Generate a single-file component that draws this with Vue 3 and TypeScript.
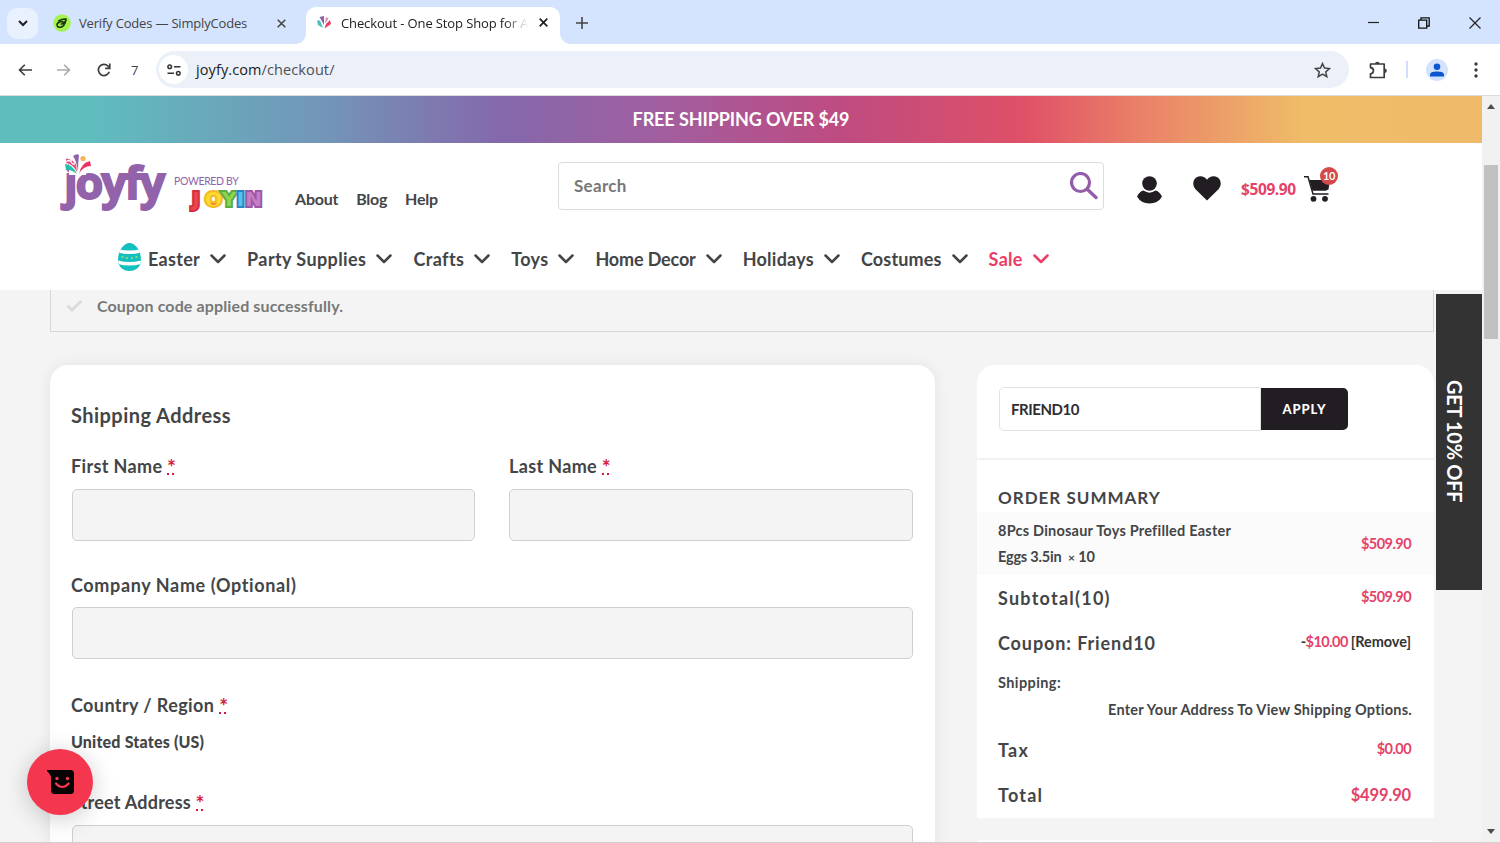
<script setup lang="ts">
interface NavItem { label: string; key: string }
const nav: NavItem[] = [
  { label: 'Easter', key: 'easter' },
  { label: 'Party Supplies', key: 'party' },
  { label: 'Crafts', key: 'crafts' },
  { label: 'Toys', key: 'toys' },
  { label: 'Home Decor', key: 'decor' },
  { label: 'Holidays', key: 'holidays' },
  { label: 'Costumes', key: 'costumes' },
  { label: 'Sale', key: 'sale' },
]
</script>

<template>
  <div class="browser">
    <div class="tabstrip">
      <button class="tab-search" aria-label="Search tabs">
        <svg width="10" height="7" viewBox="0 0 10 7"><path d="M1 1l4 4 4-4" fill="none" stroke="#1f1f1f" stroke-width="2" /></svg>
      </button>
      <div class="tab idle">
        <svg class="fav" width="18" height="18" viewBox="0 0 19 19">
          <circle cx="9.500" cy="9.500" r="9.300" fill="#a4f24f" />
          <ellipse cx="8" cy="11" rx="3.800" ry="2.800" transform="rotate(-20 8 11)" fill="none" stroke="#17320a" stroke-width="1.600" />
          <path d="M5.500 7.500q4-2.500 9-2.200M8 11q4-1 6-5M12.500 10.500l1.300-4" fill="none" stroke="#17320a" stroke-width="1.400" />
        </svg>
        <span class="tab-title first">Verify Codes — SimplyCodes</span>
        <svg class="x" width="9" height="9" viewBox="0 0 9 9"><path d="M.7.7l7.600 7.600M8.300.7L.7 8.300" stroke="#444" stroke-width="1.500" /></svg>
      </div>
      <div class="tab active">
        <svg class="fav2" width="14" height="13" viewBox="0 0 14 13">
          <path d="M0 4.500h3L6 12 1 9z" fill="#4bbec1" /><path d="M2.500 1L7 0v9z" fill="#8c62a9" /><path d="M9 1l2.500 1.500L8 8z" fill="#d98bb0" /><path d="M13 4l1 4-6.500 4.500L9 8z" fill="#ea3f69" />
        </svg>
        <span class="tab-title second">Checkout - One Stop Shop for A</span>
        <svg class="x" width="9" height="9" viewBox="0 0 9 9"><path d="M.7.7l7.600 7.600M8.300.7L.7 8.300" stroke="#1f1f1f" stroke-width="1.700" /></svg>
      </div>
      <svg class="plus" width="12" height="12" viewBox="0 0 12 12"><path d="M6 0v12M0 6h12" stroke="#444" stroke-width="1.600" /></svg>
      <div class="win">
        <svg width="11" height="12" viewBox="0 0 11 12"><path d="M0 5.500h11" stroke="#222" stroke-width="1.200" /></svg>
        <svg width="12" height="12" viewBox="0 0 12 12"><path d="M.7 3.200h8v8h-8zM3 3V.8h8.200V9H9" fill="none" stroke="#111" stroke-width="1.300" /></svg>
        <svg width="12" height="12" viewBox="0 0 12 12"><path d="M.5.5l11 11M11.500.5l-11 11" stroke="#222" stroke-width="1.200" /></svg>
      </div>
    </div>

    <div class="toolbar">
      <svg class="back" width="14" height="12" viewBox="0 0 14 12"><path d="M14 6H1.500M6.800.7L1.500 6l5.300 5.300" fill="none" stroke="#3c3c3c" stroke-width="1.600" /></svg>
      <svg class="fwd" width="14" height="12" viewBox="0 0 14 12"><path d="M0 6h12.500M7.200.7L12.500 6l-5.300 5.300" fill="none" stroke="#aaa" stroke-width="1.600" /></svg>
      <svg class="reload" width="14" height="14" viewBox="0 0 14 14"><path d="M12.300 8.800A5.600 5.600 0 1 1 11 3L12.500 4.800" fill="none" stroke="#3c3c3c" stroke-width="1.700" /><path d="M12.800.6v4.800H8.200" fill="none" stroke="#3c3c3c" stroke-width="1.600" /></svg>
      <span class="seven">7</span>
      <div class="omnibox">
        <span class="site">
          <svg width="14" height="12" viewBox="0 0 14 12"><g fill="none" stroke="#333" stroke-width="1.500"><circle cx="2.700" cy="2.700" r="1.800" /><path d="M7 2.700h6.500M.5 9.300H7" /><circle cx="11.300" cy="9.300" r="1.800" /></g></svg>
        </span>
        <span class="url">joyfy.com<i>/checkout/</i></span>
        <svg class="star" width="17" height="16" viewBox="0 0 17 16"><path d="M8.500 1.600l2 4.500 4.900.5-3.700 3.300 1.100 4.800-4.300-2.500-4.300 2.500 1.100-4.800L1.600 6.600l4.900-.5z" fill="none" stroke="#444" stroke-width="1.500" /></svg>
      </div>
      <svg class="puzzle" width="19" height="18" viewBox="0 0 19 18"><path d="M1.500 3H15.200V16.500H1.500V12.800C5.400 12.500 5.400 7 1.500 6.700z" fill="none" stroke="#3c3c3c" stroke-width="1.700" stroke-linejoin="round" /><path d="M6 3a2.300 2.300 0 0 1 4.600 0zM15.500 7.400a2.300 2.300 0 0 1 0 4.600z" fill="#3c3c3c" /></svg>
      <span class="divider"></span>
      <span class="profile"><svg width="14" height="14" viewBox="0 0 14 14"><circle cx="7" cy="3.700" r="3.300" fill="#0b57d0" /><path d="M0 13.500v-2C0 9 4 8.400 7 8.400s7 .6 7 3.100v2z" fill="#0b57d0" /></svg></span>
      <svg class="dots" width="4" height="16" viewBox="0 0 4 16"><g fill="#3c3c3c"><circle cx="2" cy="2" r="1.700" /><circle cx="2" cy="8" r="1.700" /><circle cx="2" cy="14" r="1.700" /></g></svg>
    </div>

    <div class="viewport">
      <main class="page">
        <div class="promo"><span>FREE SHIPPING OVER $49</span></div>
        <header>
          <div class="top">
            <div class="logo">
              <span class="joyfy">joyfy</span>
              <svg class="burst" width="26" height="21" viewBox="0 0 26 21">
                <rect x="4" y="8" width="17" height="13" fill="#fff" />
                <path d="M0 10q7 0 12 10Q5 15 1 16z" fill="#22bfa9" />
                <path d="M1 5q4-2 6 1t4 4l1 8Q8 10 1 9z" fill="#e64d7d" />
                <path d="M1 8q3-3 5 0t4 2M3 4q3 0 4 3" fill="none" stroke="#fff" stroke-width="1.300" />
                <path d="M8 2q4-3 6-1-1 8-1 17Q12 8 8 2z" fill="#8f62aa" />
                <circle cx="18" cy="4.500" r="2.600" fill="#f6b456" />
                <path d="M25 7l1 5q-8 0-12 8 2-11 11-13z" fill="#ee3465" />
              </svg>
              <div class="powered">
                <span class="by">POWERED BY</span>
                <span class="joyin"><b class="j">J</b><b class="o">O</b><b class="y">Y</b><b class="i">I</b><b class="n">N</b></span>
              </div>
            </div>
            <nav class="links"><a class="about">About</a><a class="blog">Blog</a><a class="help">Help</a></nav>
            <div class="search">
              <span>Search</span>
              <svg width="28" height="28" viewBox="0 0 28 28"><circle cx="10.500" cy="10.500" r="9" fill="none" stroke="#925eac" stroke-width="3.200" /><path d="M17.500 17.500l8.500 8" stroke="#925eac" stroke-width="3.400" stroke-linecap="round" /></svg>
            </div>
            <svg class="user" width="25" height="28" viewBox="0 0 25 28"><circle cx="12.500" cy="7.500" r="7.300" fill="#211d22" /><path d="M0 20.500Q3 15 6.500 14.500q6 4.300 12 0Q22 15 25 20.500 21 27.500 12.500 27.500T0 20.500z" fill="#211d22" /></svg>
            <svg class="heart" width="28" height="25" viewBox="0 0 28 25"><path d="M14 24.500L2.500 13.200C-.8 9.800-.3 4 3.200 1.600 6.800-.9 11.500 0 14 3.700 16.500 0 21.200-.9 24.800 1.600c3.500 2.400 4 8.200.7 11.600z" fill="#211d22" /></svg>
            <span class="cart-total">$509.90</span>
            <div class="cart">
              <svg width="27" height="26" viewBox="0 0 27 26"><path d="M0 .8h4L9 18h15.500" fill="none" stroke="#211d22" stroke-width="1.500" /><path d="M5.500 4H26l-1.500 9.500-3 1.300H8.500z" fill="#211d22" /><circle cx="9.500" cy="22.800" r="2.900" fill="#211d22" /><circle cx="21" cy="22.800" r="2.900" fill="#211d22" /></svg>
              <span class="badge">10</span>
            </div>
          </div>
          <nav class="menu">
            <svg class="egg" width="23" height="28" viewBox="0 0 23 28">
              <clipPath id="egg-shape"><path d="M11.500 0C18 0 23 9 23 16.500S18 28 11.500 28 0 24 0 16.500 5 0 11.500 0z" /></clipPath>
              <g clip-path="url(#egg-shape)"><rect width="23" height="28" fill="#14bfc0" /><path d="M0 6q11.500 3 23 0v3.500q-11.500 3-23 0zM0 17.500q11.500 3 23 0V21q-11.500 3-23 0z" fill="#fff" /><path d="M3.500 14h2M8 15h2M13 15h2M17.500 14h2" stroke="#a5e36b" stroke-width="1.500" /></g>
            </svg>
            <a v-for="n in nav" :key="n.key" :class="n.key">
              <span>{{ n.label }}</span>
              <svg width="16" height="10" viewBox="0 0 16 10"><path d="M1.500 1.500L8 8l6.500-6.500" fill="none" stroke="currentColor" stroke-width="2.500" stroke-linecap="round" stroke-linejoin="round" /></svg>
            </a>
          </nav>
        </header>

        <div class="notice">
          <svg width="17" height="13" viewBox="0 0 17 13"><path d="M1.500 6.500l4.500 4.500L15.500 1.700" fill="none" stroke="#dcdcdc" stroke-width="3" /></svg>
          <span>Coupon code applied successfully.</span>
        </div>

        <div class="columns">
          <section class="card form">
            <h2>Shipping Address</h2>
            <div class="pair">
              <label><span class="lab"><em>First Name</em> <abbr>*</abbr></span><span class="input"></span></label>
              <label><span class="lab last"><em>Last Name</em> <abbr>*</abbr></span><span class="input"></span></label>
            </div>
            <label class="company"><span class="lab"><em>Company Name (Optional)</em></span><span class="input"></span></label>
            <div class="country"><span class="lab"><em>Country / Region</em> <abbr>*</abbr></span><strong>United States (US)</strong></div>
            <label class="street"><span class="lab"><em>Street Address</em> <abbr>*</abbr></span><span class="input"></span></label>
          </section>

          <aside>
            <section class="card summary">
              <div class="coupon"><span class="code">FRIEND10</span><button>APPLY</button></div>
              <h3>ORDER SUMMARY</h3>
              <div class="product"><p><span class="p1">8Pcs Dinosaur Toys Prefilled Easter</span><span class="p2">Eggs 3.5in&nbsp; <small>×</small> 10</span></p><span class="money">$509.90</span></div>
              <div class="line"><span class="key">Subtotal(10)</span><span class="money">$509.90</span></div>
              <div class="line"><span class="key k-cou">Coupon: Friend10</span><span class="money"><i>-</i>$10.00 <i class="remove">[Remove]</i></span></div>
              <div class="ship">Shipping:</div>
              <div class="enter"><span>Enter Your Address To View Shipping Options.</span></div>
              <div class="line"><span class="key">Tax</span><span class="money">$0.00</span></div>
              <div class="line"><span class="key">Total</span><span class="money grand">$499.90</span></div>
            </section>
            <section class="next"></section>
          </aside>
        </div>
      </main>
      <div class="scrollbar">
        <svg width="8" height="5" viewBox="0 0 8 5"><path d="M0 5l4-5 4 5z" fill="#4d4d4d" /></svg>
        <span class="thumb"></span>
        <svg width="8" height="5" viewBox="0 0 8 5"><path d="M0 0l4 5 4-5z" fill="#4d4d4d" /></svg>
      </div>
    </div>
    <div class="offer"><span>GET 10% OFF</span></div>
    <div class="chat">
      <svg width="27" height="24" viewBox="0 0 27 24"><path d="M0 0h23.500q3.500 0 3.500 3.500v17q0 3.500-3.500 3.500H7.500Q4 24 4 20.500V7Q4 5 0 1z" fill="#060304" /><circle cx="10" cy="8.500" r="1.700" fill="#f5364f" /><circle cx="20.500" cy="8.500" r="1.700" fill="#f5364f" /><path d="M9 13.500q6.300 7 12.600 0" fill="none" stroke="#f5364f" stroke-width="2.200" stroke-linecap="round" /></svg>
    </div>
  </div>
</template>

<style>
body { margin: 0; overflow: hidden; }
</style>

<style scoped>
* { box-sizing: border-box; }
svg { display: block; flex: none; }
i, em { font-style: normal; }
.browser { position: relative; width: 1500px; height: 843px; overflow: hidden; display: flex; flex-direction: column; background: #fff; font-family: "Lato", sans-serif; font-weight: 700; color: #434547; white-space: nowrap; font-variant-ligatures: none; border-bottom: 1px solid #cfcfcf; }
.tabstrip { height: 44px; flex: none; background: #d4e3fe; display: flex; align-items: center; padding: 2px 19px 0 7px; font: 400 13px "Open Sans", sans-serif; }
.tab-search { width: 31px; height: 31px; border: 0; border-radius: 10px; background: #eaf1fe; padding: 0; display: flex; align-items: center; justify-content: center; }
.tab { display: flex; align-items: center; color: #444; }
.idle { width: 268px; padding-left: 15px; }
.tab-title { display: block; }
.first { width: 198px; margin-left: 8px; letter-spacing: -.18px; }
.active { align-self: stretch; margin-top: 5px; width: 254px; padding: 0 12px 6px 11px; background: #fff; border-radius: 10px 10px 0 0; color: #222; position: relative; }
.active::before, .active::after { content: ""; position: absolute; bottom: 0; width: 10px; height: 10px; background: radial-gradient(circle at 0 0, transparent 9.500px, #fff 10px); }
.active::before { left: -10px; }
.active::after { right: -10px; background: radial-gradient(circle at 100% 0, transparent 9.500px, #fff 10px); }
.second { width: 188px; margin: 0 10px 0 10px; letter-spacing: -.12px; mask-image: linear-gradient(90deg, #000 164px, transparent 187px); }
.plus { margin-left: 16px; }
.win { margin-left: auto; display: flex; gap: 39px; }
.toolbar { height: 52px; flex: none; display: flex; align-items: center; padding: 0 22px 0 18px; border-bottom: 1px solid #dcdde0; }
.fwd { margin-left: 25px; }
.reload { margin-left: 26px; }
.seven { font: 400 13px "Open Sans", sans-serif; margin-left: 20px; width: 24px; }
.omnibox { width: 1193px; height: 37px; border-radius: 19px; background: #ebf0f9; display: flex; align-items: center; padding: 0 18px 0 3px; margin-left: 1px; }
.site { width: 29px; height: 29px; border-radius: 50%; background: #fff; display: flex; align-items: center; justify-content: center; }
.url { font: 400 14.500px "Open Sans", sans-serif; color: #222; margin-left: 8px; letter-spacing: .1px; }
.url i { color: #4b4e53; }
.star { margin-left: auto; }
.puzzle { margin-left: 20px; }
.divider { width: 2px; height: 17px; background: #cfdffb; margin-left: 18px; }
.profile { width: 22px; height: 22px; margin-left: 18px; border-radius: 50%; background: #d3e3fd; display: flex; align-items: center; justify-content: center; }
.dots { margin-left: auto; }
.viewport { flex: 1; display: flex; min-height: 0; }
.page { width: 1482px; background: #f4f4f4; overflow: hidden; }
.promo { height: 47px; display: flex; align-items: center; justify-content: center; color: #fff; font-size: 18px; padding-bottom: 1px; background: linear-gradient(90deg, #5fbdbe 6%, #7395b8 22%, #8468ab 34%, #a05fa0 44%, #bf4b80 57%, #df5067 69%, #ea8168 77%, #efbd68 88%, #efba6a 100%); }
.promo span { letter-spacing: -.1px; }
header { height: 147px; background: #fff; padding-left: 60px; }
.top { height: 92px; display: flex; }
.logo { width: 202px; height: 70px; display: flex; position: relative; margin-top: 9px; }
.burst { position: absolute; left: 5px; top: 2px; }
.joyfy { width: 108px; font: 700 45px/70px "Open Sans", sans-serif; color: #9262aa; -webkit-text-stroke: 1.800px #9262aa; letter-spacing: -2.200px; margin-top: -5px; padding-left: 4px; }
.powered { margin-left: 4px; padding-top: 23px; }
.by { display: block; font: 400 10.500px/13px "Lato", sans-serif; color: #9262aa; letter-spacing: -.35px; margin-left: 2px; }
.joyin { display: flex; font: 700 20px/22px "DejaVu Sans", sans-serif; margin-left: 15px; }
.joyin b { -webkit-text-stroke: 4px var(--edge); paint-order: stroke fill; text-align: center; position: relative; }
.j { color: #ee4351; --edge: #d2303f; width: 18px; }
.o { color: #ffd92e; --edge: #f3b82b; width: 17px; display: flex; justify-content: center; }
.o::after { content: ""; position: absolute; left: 5px; top: 10px; width: 7px; height: 5px; border-bottom: 2px solid #ef8f2c; border-radius: 0 0 5px 5px; }
.y { color: #8fd34f; --edge: #59ad42; width: 14px; display: flex; justify-content: center; }
.i { color: #55c3ee; --edge: #2c83c4; width: 9px; display: flex; justify-content: center; }
.n { color: #c77cc4; --edge: #9c57a6; width: 17px; display: flex; justify-content: center; }
.links { display: flex; justify-content: space-between; width: 143px; margin: 44px 0 0 33px; font-size: 16px; line-height: 24px; letter-spacing: -.2px; }
.search { width: 546px; height: 48px; margin: 19px 0 0 120px; border: 1px solid #ddd; border-radius: 4px; padding: 0 5px 0 15px; display: flex; align-items: center; justify-content: space-between; font-size: 17px; color: #777; }
.search span { letter-spacing: .3px; margin-top: -2px; }
.user { margin: 33px 0 0 33px; }
.heart { margin: 33px 0 0 31px; }
.cart-total { margin: 36px 0 0 20px; width: 63px; color: #e5426a; font: 700 15.500px/20px "Open Sans", sans-serif; letter-spacing: -.4px; }
.cart { position: relative; margin-top: 33px; }
.badge { position: absolute; left: 16px; top: -9px; width: 18px; height: 18px; border-radius: 50%; background: #d5484b; color: #fff; font-size: 11px; line-height: 18px; text-align: center; letter-spacing: -.5px; }
.menu { display: flex; align-items: center; height: 48px; padding-left: 58px; font-size: 18px; }
.egg { margin-right: 7px; margin-top: -5px; }
.menu a { display: flex; align-items: center; gap: 10px; margin-right: 21px; }
.easter, .toys { letter-spacing: .3px; }
.party { letter-spacing: .4px; }
.crafts { letter-spacing: .4px; }
.decor { letter-spacing: -.15px; }
.holidays { letter-spacing: .25px; }
.costumes { letter-spacing: .15px; }
.menu .sale { color: #e93d66; letter-spacing: .3px; }
.notice { margin-left: 50px; width: 1384px; height: 42px; border: 1px solid #d7d7d7; border-top: 0; display: flex; align-items: center; padding: 0 0 10px 15px; gap: 14px; font-size: 16px; color: #787878; letter-spacing: .12px; }
.notice span { margin-top: -1px; }
.columns { display: flex; gap: 42px; padding: 33px 0 0 50px; }
.card { background: #fff; border-radius: 18px; }
.form { width: 885px; height: 520px; padding: 0 22px; box-shadow: 0 0 16px rgba(0,0,0,.07); }
h2 { margin: 0 0 0 -1px; padding-top: 37px; font-size: 20px; line-height: 26px; height: 86px; letter-spacing: .45px; }
.lab { display: block; font-size: 18px; line-height: 30px; height: 38px; letter-spacing: .35px; margin-left: -1px; }
.last { margin-left: 0; }
abbr { color: #d7193c; display: inline-block; width: 8px; line-height: 18px; font-size: 21px; letter-spacing: 0; height: 17px; vertical-align: -2px; background: linear-gradient(#d7193c, #d7193c) 0 100% / 2px 2px no-repeat, linear-gradient(#d7193c, #d7193c) 5px 100% / 2px 2px no-repeat; }
.input { display: block; height: 52px; border: 1px solid #cfcfcf; border-radius: 5px; background: #f4f4f4; }
.pair { display: grid; grid-template-columns: 403px 404px; gap: 34px; }
.company { display: block; margin-top: 29px; }
.company .lab, .street .lab { height: 37px; }
.company .lab { letter-spacing: .63px; }
.country { margin-top: 31px; }
.country .lab { letter-spacing: .4px; }
.country strong { display: block; font-size: 16px; line-height: 20px; margin: 4px 0 0 -1px; letter-spacing: .18px; }
.street { display: block; margin-top: 36px; }
.street .lab { line-height: 29px; letter-spacing: .22px; }
.summary { width: 457px; height: 453px; border-radius: 18px 18px 0 0; }
.coupon { height: 95px; border-bottom: 2px solid #f1f1f1; padding: 22px 0 0 22px; display: flex; }
.code { width: 262px; height: 44px; border: 1px solid #e2e2e2; border-radius: 5px 0 0 5px; padding-left: 11px; font-size: 15px; line-height: 42px; color: #302d32; letter-spacing: -.45px; }
.coupon button { width: 87px; height: 42px; margin-top: 1px; border: 0; border-radius: 0 5px 5px 0; background: #211d22; color: #fff; font: 900 13px "Lato", sans-serif; letter-spacing: .9px; padding: 0; }
h3 { margin: 0; padding: 25px 0 0 21px; font-size: 17px; line-height: 25px; height: 52px; letter-spacing: 1px; }
.product { background: #fbfbfb; height: 63px; display: flex; justify-content: space-between; align-items: center; padding: 1px 23px 0 21px; font-size: 14.500px; line-height: 25.500px; }
.product p { margin: 0; } .product p span { display: block; }
.p1 { letter-spacing: .22px; } .p2 { letter-spacing: -.2px; }
small { font-size: 12px; }
.money { color: #e5426a; font-size: 14.500px; letter-spacing: -.55px; }
.money i { color: #333; }
.money .remove { letter-spacing: -.05px; }
.line { height: 45px; display: flex; justify-content: space-between; align-items: center; padding: 0 23px 0 21px; }
.line .money { margin-top: -2px; }
.key { font-size: 18px; letter-spacing: 1.250px; }
.k-cou { letter-spacing: .9px; }
.ship { padding-left: 21px; font-size: 14.500px; line-height: 26px; margin-top: 5px; letter-spacing: .4px; }
.enter { text-align: right; padding-right: 22px; font-size: 14.500px; line-height: 27px; height: 31px; letter-spacing: .23px; }
.line .grand { font-size: 16.500px; letter-spacing: -.15px; margin-top: 0; }
.next { height: 10px; margin-top: 22px; background: #fff; border-radius: 4px 4px 0 0; }
.scrollbar { width: 18px; background: #f1f1f1; display: flex; flex-direction: column; align-items: center; padding: 8px 0 8px; }
.thumb { width: 14px; height: 174px; margin: 56px 0 auto; background: #c1c1c1; }
.offer { position: absolute; left: 1436px; top: 294px; width: 46px; height: 296px; background: #333; color: #fff; display: flex; align-items: center; justify-content: center; }
.offer span { writing-mode: vertical-rl; font-size: 20px; margin: -2px 9px 0 0; letter-spacing: -.3px; }
.chat { position: absolute; left: 27px; top: 749px; width: 66px; height: 66px; border-radius: 50%; background: #f5364f; box-shadow: 0 4px 24px rgba(0,0,0,.2); display: flex; align-items: center; justify-content: center; padding-left: 1px; }
</style>
